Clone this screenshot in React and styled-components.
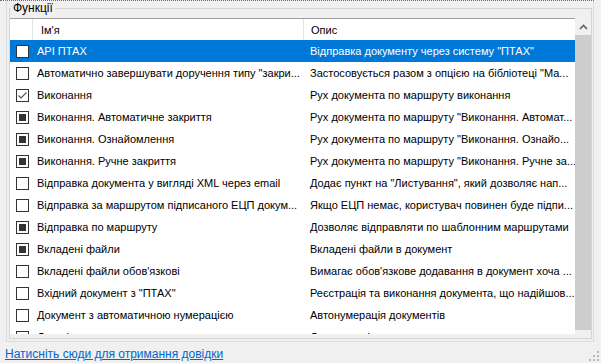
import React from "react";
import styled, { createGlobalStyle } from "styled-components";

const GlobalStyle = createGlobalStyle`
  html, body { margin:0; padding:0; background:#f0f0f0; }
  body { font-family:"Liberation Sans", Arial, sans-serif; font-size:11px; color:#000; }
`;

const rows = [
  { state: "off", name: "АРІ ПТАХ", desc: "Відправка документу через систему \"ПТАХ\"", selected: true },
  { state: "off", name: "Автоматично завершувати доручення типу \"закри...", desc: "Застосовується разом з опцією на бібліотеці \"Ма..." },
  { state: "check", name: "Виконання", desc: "Рух документа по маршруту виконання" },
  { state: "fill", name: "Виконання. Автоматичне закриття", desc: "Рух документа по маршруту \"Виконання. Автомат..." },
  { state: "fill", name: "Виконання. Ознайомлення", desc: "Рух документа по маршруту \"Виконання. Ознайо..." },
  { state: "fill", name: "Виконання. Ручне закриття", desc: "Рух документа по маршруту \"Виконання. Ручне за..." },
  { state: "off", name: "Відправка документа у вигляді XML через email", desc: "Додає пункт на \"Листування\", який дозволяє нап..." },
  { state: "off", name: "Відправка за маршрутом підписаного ЕЦП докум...", desc: "Якщо ЕЦП немає, користувач повинен буде підпи..." },
  { state: "fill", name: "Відправка по маршруту", desc: "Дозволяє відправляти по шаблонним маршрутами" },
  { state: "fill", name: "Вкладені файли", desc: "Вкладені файли в документ" },
  { state: "off", name: "Вкладені файли обов'язкові", desc: "Вимагає обов'язкове додавання в документ хоча ..." },
  { state: "off", name: "Вхідний документ з \"ПТАХ\"", desc: "Реєстрація та виконання документа, що надійшов..." },
  { state: "off", name: "Документ з автоматичною нумерацією", desc: "Автонумерація документів" },
  { state: "fill", name: "Договір з контрагентом", desc: "Додає реквізити договору" },
];

const Window = styled.div`
  width:601px;
  height:363px;
  display:flex;
  flex-direction:column;
  overflow:hidden;
`;

const Frame = styled.div`
  width:594px;
  height:342px;
  box-sizing:border-box;
  border-top:1px dotted #6d6d6d;
  padding-left:6px;
  display:flex;
`;

const Panel = styled.div`
  flex:1;
  box-sizing:border-box;
  border:1px solid #dcdcdc;
  border-top:none;
  padding:0 1px 2px 2px;
  display:flex;
`;

const GroupBox = styled.fieldset`
  flex:1;
  min-width:0;
  margin:0;
  padding:3px 0 3px 0;
  border:1px solid #d5d5d5;
  display:flex;
  flex-direction:column;
`;

const Legend = styled.legend`
  font-size:12px;
  line-height:14px;
  padding:0 2px;
  margin-left:1px;
`;

const Grid = styled.div`
  display:flex;
  height:316px;
`;

const List = styled.div`
  width:565px;
  background:#fff;
  display:flex;
  flex-direction:column;
  overflow:hidden;
`;

const cols = "23px 271px 271px";

const HeaderRow = styled.div`
  display:grid;
  grid-template-columns:${cols};
  height:21px;
  flex:none;
  border-top:1px solid #a0a0a0;
`;

const HeaderCell = styled.div`
  display:flex;
  align-items:center;
  padding-left:${(p) => p.$pad || 0}px;
  border-right:${(p) => (p.$sep ? "1px solid #e5e5e5" : "none")};
`;

const Row = styled.div`
  display:grid;
  grid-template-columns:${cols};
  height:22px;
  flex:none;
  align-items:center;
  background:${(p) => (p.$selected ? "#0078d7" : "#fff")};
  color:${(p) => (p.$selected ? "#fff" : "#000")};
`;

const Cell = styled.div`
  padding-left:${(p) => p.$pad}px;
  white-space:nowrap;
  overflow:hidden;
`;

const BoxCell = styled.div`
  display:flex;
  align-items:center;
  padding-left:6px;
`;

const Box = styled.span`
  width:13px;
  height:13px;
  box-sizing:border-box;
  border:1px solid #333;
  background:#fff;
  display:flex;
  align-items:center;
  justify-content:center;
`;

const Fill = styled.span`
  width:7px;
  height:7px;
  background:#333;
`;

const Scrollbar = styled.div`
  width:16px;
  background:#f0f0f0;
  display:flex;
  flex-direction:column;
  align-items:center;
`;

const ArrowBox = styled.div`
  height:17px;
  width:100%;
  display:flex;
  align-items:center;
  justify-content:center;
  padding-top:1px;
  box-sizing:border-box;
`;

const Thumb = styled.div`
  width:16px;
  height:295px;
  background:#cdcdcd;
`;

const Footer = styled.div`
  flex:1;
  display:flex;
  justify-content:space-between;
  align-items:flex-end;
  padding:0 2px 2px 5px;
`;

const HelpLink = styled.a`
  color:#0066cc;
  text-decoration:underline;
  font-size:12px;
  line-height:14px;
  cursor:pointer;
`;

function CheckBox({ state }) {
  return (
    <Box>
      {state === "fill" && <Fill />}
      {state === "check" && (
        <svg width="11" height="11" viewBox="0 0 11 11">
          <path d="M1.5 5.5 L4 8 L9.5 2.5" fill="none" stroke="#555" strokeWidth="1.1" />
        </svg>
      )}
    </Box>
  );
}

function Grip() {
  const dots = [[8, 0], [4, 4], [8, 4], [0, 8], [4, 8], [8, 8]];
  return (
    <svg width="10" height="10" viewBox="0 0 10 10">
      {dots.map(([x, y], i) => (
        <rect key={i} x={x} y={y} width="2" height="2" fill="#b9b9b9" />
      ))}
    </svg>
  );
}

export default function App() {
  return (
    <Window>
      <GlobalStyle />
      <Frame>
        <Panel>
          <GroupBox>
            <Legend>Функції</Legend>
            <Grid>
              <List>
                <HeaderRow>
                  <HeaderCell $sep />
                  <HeaderCell $sep $pad={8}>Ім'я</HeaderCell>
                  <HeaderCell $pad={7}>Опис</HeaderCell>
                </HeaderRow>
                {rows.map((r, i) => (
                  <Row key={i} $selected={r.selected}>
                    <BoxCell>
                      <CheckBox state={r.state} />
                    </BoxCell>
                    <Cell $pad={4}>{r.name}</Cell>
                    <Cell $pad={6}>{r.desc}</Cell>
                  </Row>
                ))}
              </List>
              <Scrollbar>
                <ArrowBox>
                  <svg width="9" height="6" viewBox="0 0 9 6">
                    <path d="M1 5 L4.5 1.5 L8 5" fill="none" stroke="#606060" strokeWidth="1.6" />
                  </svg>
                </ArrowBox>
                <Thumb />
              </Scrollbar>
            </Grid>
          </GroupBox>
        </Panel>
      </Frame>
      <Footer>
        <HelpLink>Натисніть сюди для отримання довідки</HelpLink>
        <Grip />
      </Footer>
    </Window>
  );
}
